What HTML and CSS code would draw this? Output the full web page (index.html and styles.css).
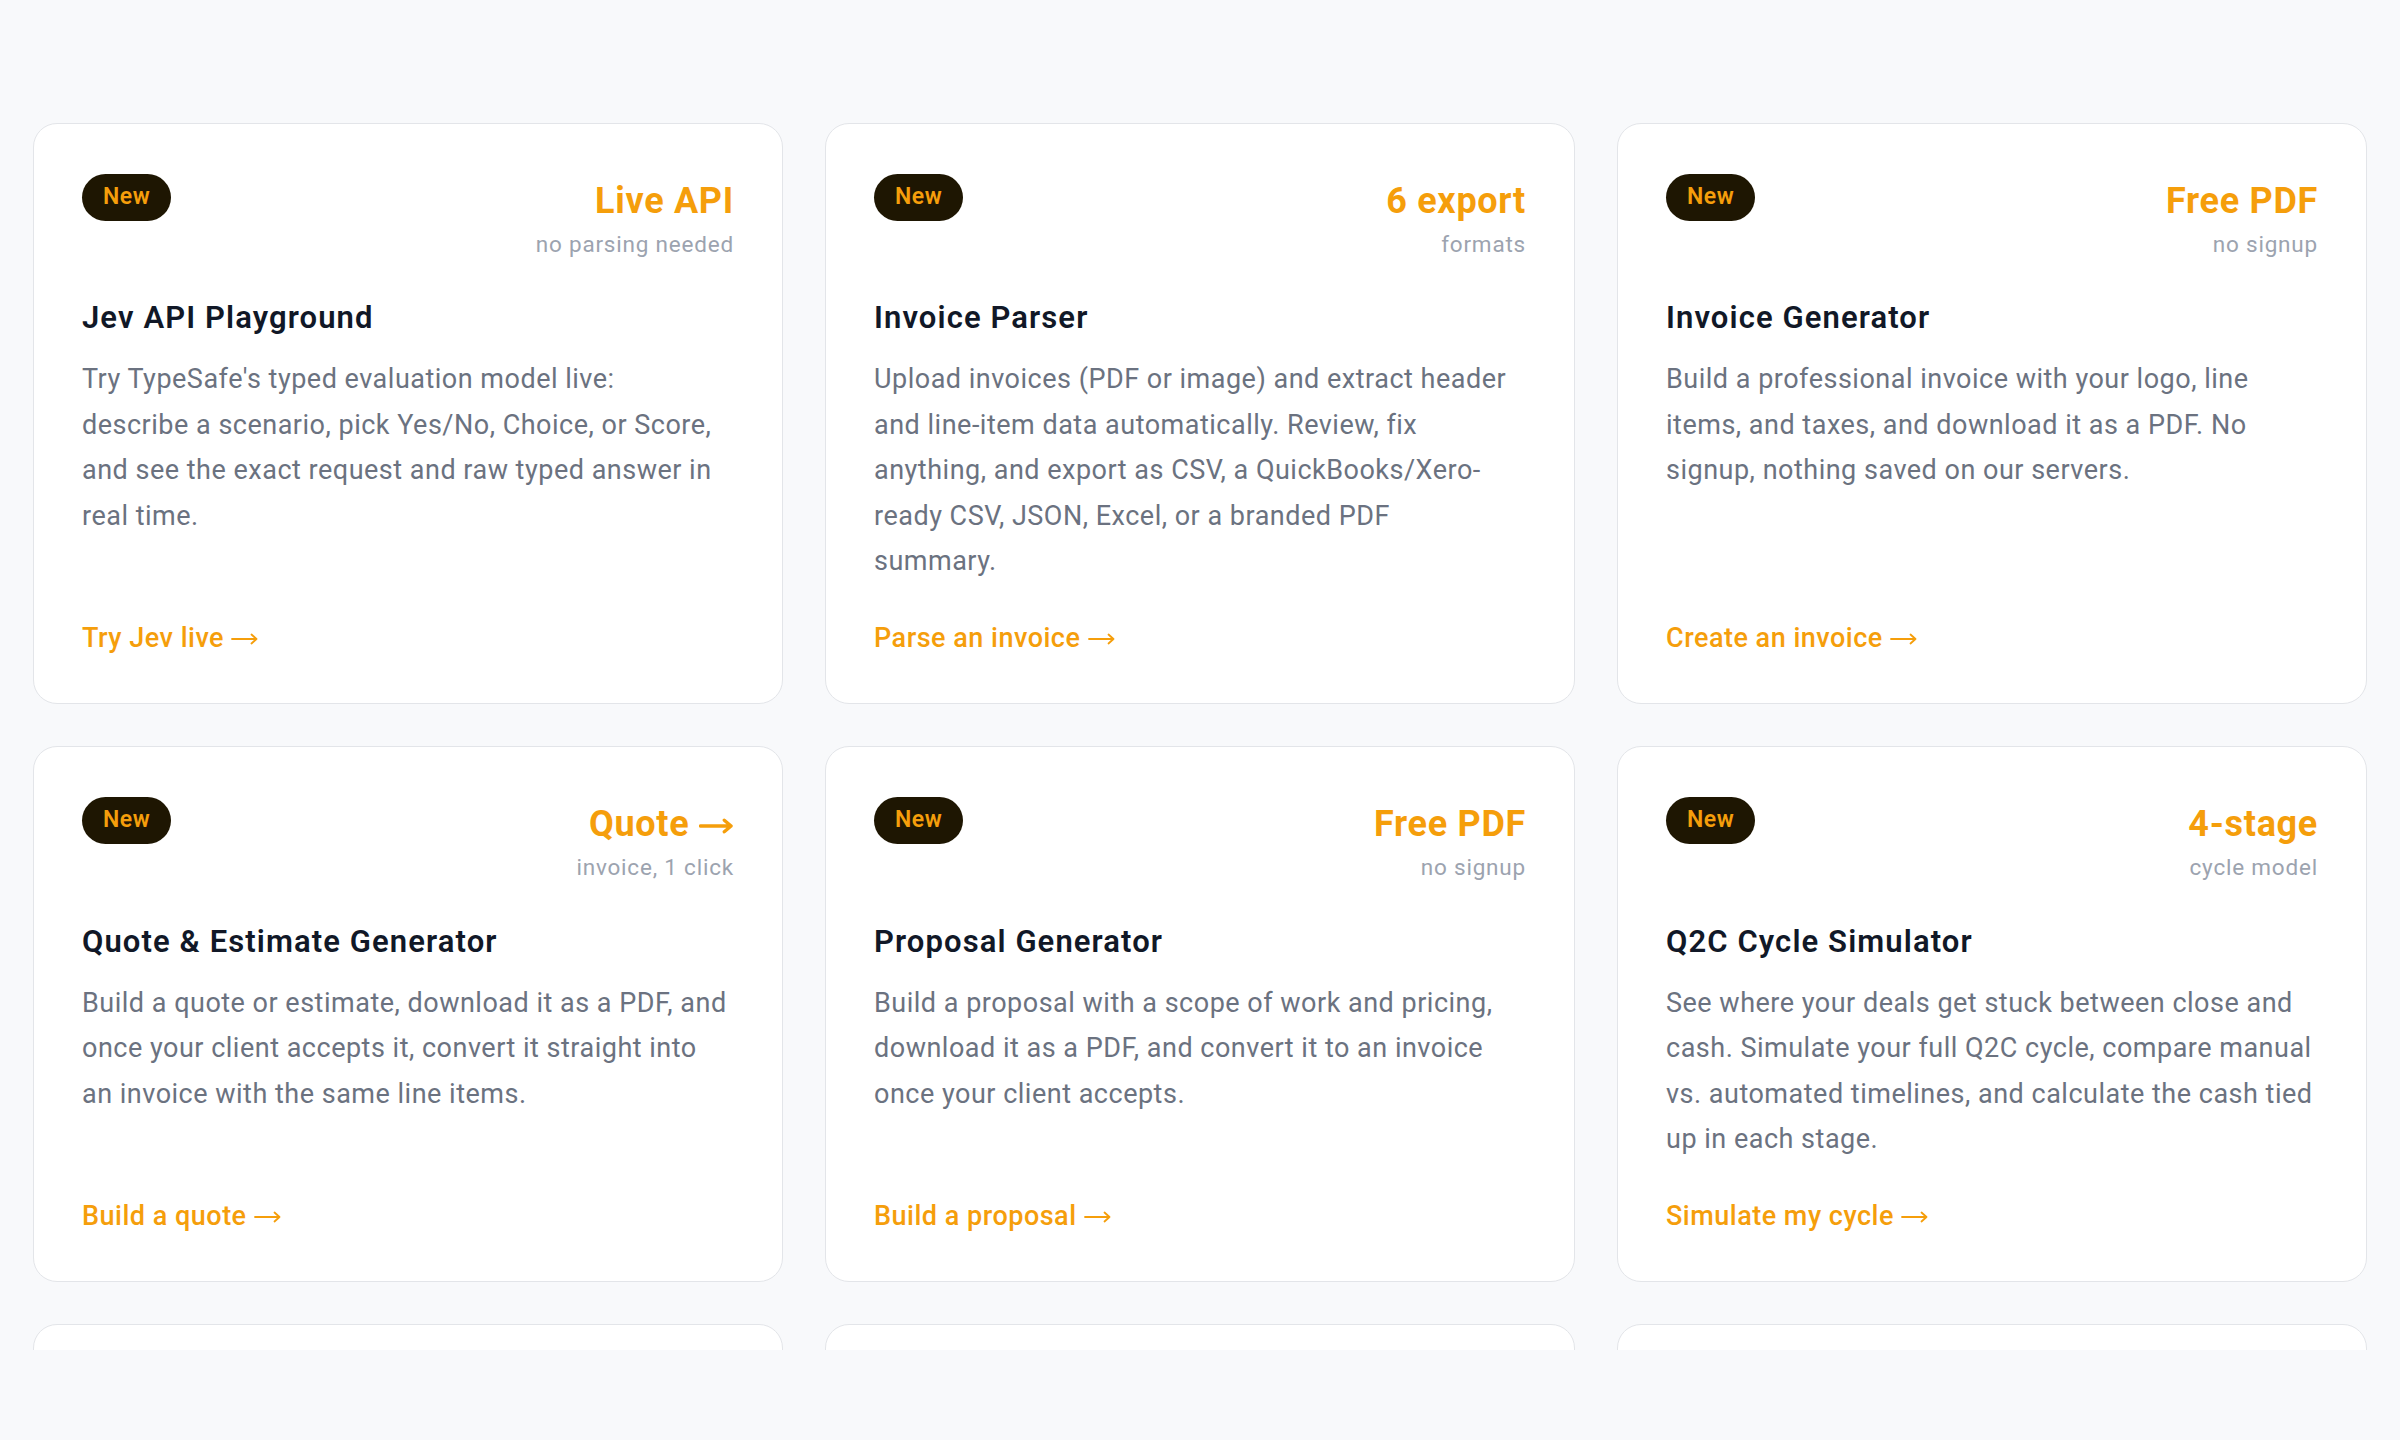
FILE: index.html
```html
<!DOCTYPE html>
<html lang="en">
<head>
<meta charset="utf-8">
<title>Tools</title>
<link rel="stylesheet" href="styles.css">
</head>
<body>
<main class="page">
  <section class="grid">
    <article class="card">
      <div class="card-head">
        <span class="badge">New</span>
        <div class="stat">
          <div class="stat-value">Live API</div>
          <div class="stat-note">no parsing needed</div>
        </div>
      </div>
      <h3 class="card-title">Jev API Playground</h3>
      <p class="card-desc">Try TypeSafe's typed evaluation model live:<br>describe a scenario, pick Yes/No, Choice, or Score,<br>and see the exact request and raw typed answer in<br>real time.</p>
      <a class="card-link" href="#">Try Jev live <svg class="arrow" viewBox="0 0 27 12" aria-hidden="true"><path d="M1 6H25.5M20.5 1.5L25.5 6L20.5 10.5"/></svg></a>
    </article>
    <article class="card">
      <div class="card-head">
        <span class="badge">New</span>
        <div class="stat">
          <div class="stat-value">6 export</div>
          <div class="stat-note">formats</div>
        </div>
      </div>
      <h3 class="card-title">Invoice Parser</h3>
      <p class="card-desc">Upload invoices (PDF or image) and extract header<br>and line-item data automatically. Review, fix<br>anything, and export as CSV, a QuickBooks/Xero-<br>ready CSV, JSON, Excel, or a branded PDF<br>summary.</p>
      <a class="card-link" href="#">Parse an invoice <svg class="arrow" viewBox="0 0 27 12" aria-hidden="true"><path d="M1 6H25.5M20.5 1.5L25.5 6L20.5 10.5"/></svg></a>
    </article>
    <article class="card">
      <div class="card-head">
        <span class="badge">New</span>
        <div class="stat">
          <div class="stat-value">Free PDF</div>
          <div class="stat-note">no signup</div>
        </div>
      </div>
      <h3 class="card-title">Invoice Generator</h3>
      <p class="card-desc">Build a professional invoice with your logo, line<br>items, and taxes, and download it as a PDF. No<br>signup, nothing saved on our servers.</p>
      <a class="card-link" href="#">Create an invoice <svg class="arrow" viewBox="0 0 27 12" aria-hidden="true"><path d="M1 6H25.5M20.5 1.5L25.5 6L20.5 10.5"/></svg></a>
    </article>
    <article class="card">
      <div class="card-head">
        <span class="badge">New</span>
        <div class="stat">
          <div class="stat-value">Quote <svg class="arrow-bold" viewBox="0 0 36 16" aria-hidden="true"><path d="M1.5 8H33M26 2L33 8L26 14"/></svg></div>
          <div class="stat-note">invoice, 1 click</div>
        </div>
      </div>
      <h3 class="card-title">Quote &amp; Estimate Generator</h3>
      <p class="card-desc">Build a quote or estimate, download it as a PDF, and<br>once your client accepts it, convert it straight into<br>an invoice with the same line items.</p>
      <a class="card-link" href="#">Build a quote <svg class="arrow" viewBox="0 0 27 12" aria-hidden="true"><path d="M1 6H25.5M20.5 1.5L25.5 6L20.5 10.5"/></svg></a>
    </article>
    <article class="card">
      <div class="card-head">
        <span class="badge">New</span>
        <div class="stat">
          <div class="stat-value">Free PDF</div>
          <div class="stat-note">no signup</div>
        </div>
      </div>
      <h3 class="card-title">Proposal Generator</h3>
      <p class="card-desc">Build a proposal with a scope of work and pricing,<br>download it as a PDF, and convert it to an invoice<br>once your client accepts.</p>
      <a class="card-link" href="#">Build a proposal <svg class="arrow" viewBox="0 0 27 12" aria-hidden="true"><path d="M1 6H25.5M20.5 1.5L25.5 6L20.5 10.5"/></svg></a>
    </article>
    <article class="card">
      <div class="card-head">
        <span class="badge">New</span>
        <div class="stat">
          <div class="stat-value">4-stage</div>
          <div class="stat-note">cycle model</div>
        </div>
      </div>
      <h3 class="card-title">Q2C Cycle Simulator</h3>
      <p class="card-desc">See where your deals get stuck between close and<br>cash. Simulate your full Q2C cycle, compare manual<br>vs. automated timelines, and calculate the cash tied<br>up in each stage.</p>
      <a class="card-link" href="#">Simulate my cycle <svg class="arrow" viewBox="0 0 27 12" aria-hidden="true"><path d="M1 6H25.5M20.5 1.5L25.5 6L20.5 10.5"/></svg></a>
    </article>
    <article class="card card-stub" aria-hidden="true"></article>
    <article class="card card-stub" aria-hidden="true"></article>
    <article class="card card-stub" aria-hidden="true"></article>
  </section>
</main>
</body>
</html>
```
FILE: styles.css
```css
* { box-sizing: border-box; }

html, body {
  margin: 0;
  background: #f8f9fb;
}

body {
  font-family: Roboto, "Liberation Sans", "DejaVu Sans", sans-serif;
  -webkit-font-smoothing: antialiased;
}

.page {
  height: 1350px;
  overflow: hidden;
  padding: 123px 33px 0;
}

.grid {
  display: grid;
  grid-template-columns: repeat(3, 1fr);
  gap: 42px;
}

.card {
  background: #ffffff;
  border: 1.5px solid #e3e5e9;
  border-radius: 24px;
  padding: 49.5px 48px 45px;
  display: flex;
  flex-direction: column;
}

.card-stub {
  min-height: 400px;
}

.card-head {
  display: flex;
  justify-content: space-between;
  align-items: flex-start;
  margin-bottom: 36px;
}

.badge {
  display: inline-block;
  background: #1e1602;
  color: #f59e0b;
  font-weight: 600;
  font-size: 23px;
  letter-spacing: 0.5px;
  line-height: 30px;
  padding: 8.5px 21px;
  border-radius: 999px;
}

.stat {
  text-align: right;
}

.stat-value {
  font-size: 36px;
  font-weight: 700;
  letter-spacing: 0.7px;
  line-height: 54px;
  color: #f59e0b;
}

.arrow-bold {
  width: 35px;
  height: 16px;
  vertical-align: 1.5px;
  fill: none;
  stroke: currentColor;
  stroke-width: 3.4;
  stroke-linecap: round;
  stroke-linejoin: round;
}

.stat-note {
  font-size: 22.5px;
  letter-spacing: 0.8px;
  line-height: 33.75px;
  color: #9ca3af;
}

.card-title {
  font-size: 31px;
  font-weight: 600;
  letter-spacing: 1.1px;
  line-height: 42px;
  color: #111827;
  margin: 0 0 18px;
}

.card-desc {
  font-size: 27px;
  letter-spacing: 0.5px;
  line-height: 45.5px;
  color: #6b7280;
  white-space: nowrap;
  margin: 0 0 33px;
}

.card-link {
  margin-top: auto;
  font-size: 27px;
  letter-spacing: 0.5px;
  line-height: 40.5px;
  font-weight: 500;
  color: #f59e0b;
  text-decoration: none;
}

.arrow {
  width: 27px;
  height: 12px;
  vertical-align: 1.5px;
  fill: none;
  stroke: currentColor;
  stroke-width: 1.8;
  stroke-linecap: round;
  stroke-linejoin: round;
}
```
